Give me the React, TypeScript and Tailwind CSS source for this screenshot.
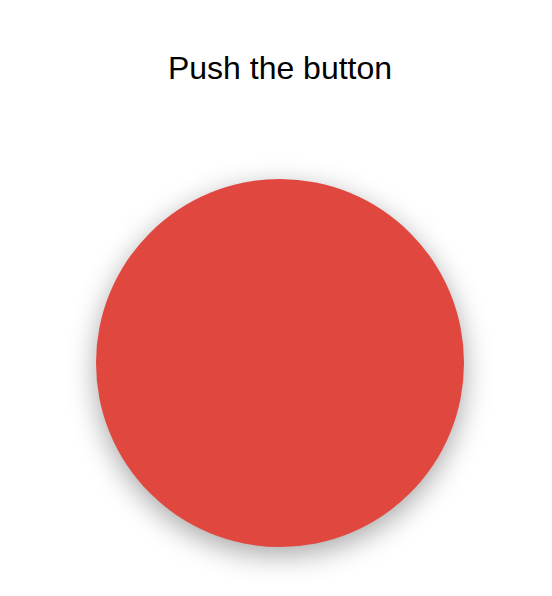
export default function App() {
  return (
    <div className="flex min-h-[596px] w-full flex-col items-center bg-white pl-2 font-['Liberation_Sans',Arial,sans-serif]">
      {/* Title */}
      <h1 className="mt-[50px] text-[32px] leading-[36px] font-normal text-black">Push the button</h1>

      {/* Big red button */}
      <button
        type="button"
        aria-label="Push"
        className="mt-[93px] h-[368px] w-[368px] rounded-full bg-[#e0483f] shadow-[0_8px_28px_rgba(0,0,0,0.35)]"
      />
    </div>
  );
}
